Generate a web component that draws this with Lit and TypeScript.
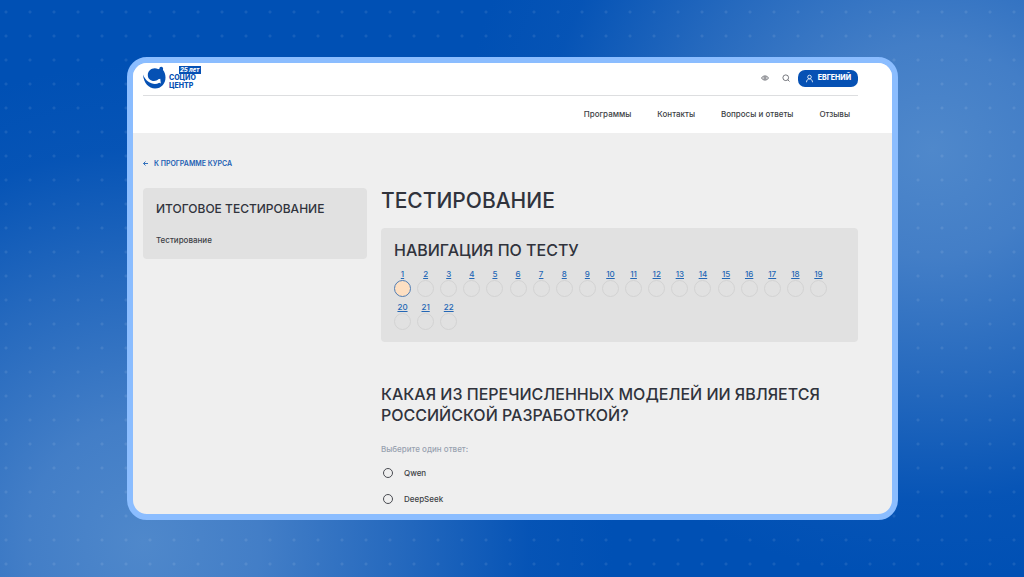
import { LitElement, html, css } from "lit";
import { customElement, state } from "lit/decorators.js";
import { classMap } from "lit/directives/class-map.js";

const NAV = ["Программы", "Контакты", "Вопросы и ответы", "Отзывы"];
const QUESTIONS = Array.from({ length: 22 }, (_, i) => i + 1);
const ANSWERS = ["Qwen", "DeepSeek"];

@customElement("site-header")
class SiteHeader extends LitElement {
  static styles = css`
    :host {
      display: block;
      background: #fff;
      padding: 0 34px 0 10px;
    }
    .top {
      display: flex;
      align-items: center;
      height: 30px;
      padding-bottom: 2px;
      border-bottom: 1px solid #dddee0;
    }
    .logo {
      display: flex;
      gap: 3px;
      color: #0651b4;
      text-decoration: none;
      margin-right: auto;
    }
    .mark {
      width: 23px;
      height: 23px;
    }
    .words {
      display: flex;
      flex-direction: column;
      font: 800 7px/8px "Inter", sans-serif;
    }
    .years {
      margin-left: 10px;
      padding: 0 1px;
      background: #0651b4;
      color: #fff;
      font-size: 6px;
      font-style: italic;
    }
    .tools {
      display: flex;
      align-items: center;
      gap: 13px;
      margin-right: 8px;
    }
    .tool {
      display: flex;
      padding: 0;
      border: 0;
      background: none;
      color: #55585f;
      cursor: pointer;
    }
    .tool svg {
      width: 8px;
      height: 8px;
    }
    .user {
      display: flex;
      align-items: center;
      gap: 4px;
      height: 17px;
      padding: 0 7px;
      border: 0;
      border-radius: 7px;
      background: #0651b4;
      color: #fff;
      font: 800 7px/10px "Inter", sans-serif;
      cursor: pointer;
    }
    .user svg {
      width: 9px;
      height: 9px;
    }
    .menu {
      display: flex;
      justify-content: flex-end;
      align-items: center;
      gap: 26px;
      height: 35px;
      padding: 0 8px 2px 0;
    }
    .menu a {
      color: #3d3f46;
      font: 500 8px/12px "Inter", sans-serif;
      text-decoration: none;
    }
  `;

  render() {
    return html`
      <div class="top">
        <a class="logo" href="#" aria-label="Социо Центр">
          <svg class="mark" viewBox="0 0 23 23" fill="currentColor">
            <path
              d="M0 8.500C.5 17 6 22.500 12 22.500C18.500 22.500 22.500 17.500 22.500 11.500C22.500 8.500 21.500 5.500 20 4C20.500 2 19.500 .8 18.200 .8C17 .8 16.200 1.800 16.400 3C15.800 3.200 15.500 3.200 15 3C10 .8 5 4 4.800 9C4.700 12.500 7.500 15 11 15C12.800 15 14.300 14.400 15.300 13.300L17.300 12.800L17.800 17.500L16.200 16.800C11 20 3 16.500 0 8.500Z"
            />
          </svg>
          <span class="words">
            <span class="years">25 лет</span>
            <span>СОЦИО</span>
            <span>ЦЕНТР</span>
          </span>
        </a>
        <div class="tools">
          <button class="tool" aria-label="Версия для слабовидящих">
            <svg viewBox="0 0 16 16" fill="none" stroke="currentColor" stroke-width="1.600">
              <path d="M1 8C4 2.500 12 2.500 15 8C12 13.500 4 13.500 1 8Z" />
              <circle cx="8" cy="8" r="2.300" />
            </svg>
          </button>
          <button class="tool" aria-label="Поиск">
            <svg viewBox="0 0 16 16" fill="none" stroke="currentColor" stroke-width="1.600">
              <circle cx="7.500" cy="7.500" r="5.700" />
              <path d="M11.500 11.500L15 15" />
            </svg>
          </button>
        </div>
        <button class="user">
          <svg viewBox="0 0 18 18" fill="none" stroke="currentColor" stroke-width="1.600">
            <circle cx="9" cy="6" r="3.600" />
            <path d="M3 16.500C3 12.500 5.500 9.800 9 9.800S15 12.500 15 16.500" />
          </svg>
          ЕВГЕНИЙ
        </button>
      </div>
      <nav class="menu">${NAV.map((t) => html`<a href="#">${t}</a>`)}</nav>
    `;
  }
}

@customElement("test-navigation")
class TestNavigation extends LitElement {
  @state() current = 1;

  static styles = css`
    :host {
      display: block;
      padding: 12px 31px 12px 13px;
      border-radius: 4px;
      background: #e1e1e1;
    }
    .title {
      margin: 0;
      font: 500 16px/21px "Inter", sans-serif;
      white-space: nowrap;
    }
    .list {
      display: grid;
      grid-template-columns: repeat(19, 17px);
      justify-content: space-between;
      row-gap: 5px;
      margin-top: 8px;
    }
    .item {
      display: flex;
      flex-direction: column;
      align-items: center;
      color: #2467b5;
      font: 500 8px/10px "Inter", sans-serif;
      text-decoration: underline;
    }
    .dot {
      box-sizing: border-box;
      width: 17px;
      height: 17px;
      margin-top: 1px;
      border: 1px solid #d3d3d3;
      border-radius: 50%;
    }
    .current .dot {
      border-color: #4f7db5;
      background: #fddfc2;
    }
  `;

  render() {
    return html`
      <h2 class="title">НАВИГАЦИЯ ПО ТЕСТУ</h2>
      <nav class="list">
        ${QUESTIONS.map(
          (n) => html`<a
            href="#"
            class=${classMap({ item: true, current: n === this.current })}
            @click=${() => (this.current = n)}
            >${n}<span class="dot"></span
          ></a>`
        )}
      </nav>
    `;
  }
}

@customElement("app-root")
class AppRoot extends LitElement {
  static styles = css`
    :host {
      display: flex;
      box-sizing: border-box;
      height: 100vh;
      padding: 57px 126px 57px 127px;
      overflow: hidden;
      color: #30333c;
      font: 500 8px/12px "Inter", sans-serif;
      background:
        radial-gradient(circle at 6px 12px, #ffffff16 1px, #ffffff00 2px) 0 0 / 24px 24px,
        radial-gradient(470px 430px at 91% 26%, #4f88cb 0%, #4a83c9e6 25%, #3d79c499 55%, #1e63bc33 82%, #0050b400 100%),
        radial-gradient(470px 480px at 14% 94%, #4f88cb 0%, #4a83c9e6 25%, #3d79c499 55%, #1e63bc33 82%, #0050b400 100%),
        #0050b4;
    }
    .window {
      flex: 1;
      min-width: 0;
      overflow: hidden;
      border: 6px solid #8bbdff;
      border-radius: 20px;
      background: #efefef;
    }
    .page {
      padding: 24px 34px 24px 10px;
    }
    .back {
      display: inline-flex;
      align-items: center;
      gap: 6px;
      color: #1c61b4;
      font-size: 7px;
      font-weight: 600;
      text-decoration: none;
    }
    .back svg {
      width: 5px;
      height: 5px;
    }
    .columns {
      display: grid;
      grid-template-columns: 224px minmax(0, 1fr);
      align-items: start;
      gap: 14px;
      margin-top: 18px;
    }
    .side {
      padding: 13px;
      border-radius: 4px;
      background: #e1e1e1;
    }
    .side-title {
      margin: 0 0 17px;
      font: 500 12px/16px "Inter", sans-serif;
      white-space: nowrap;
    }
    .side-link {
      display: block;
      color: #3d3f46;
      text-decoration: none;
    }
    .title {
      margin: 0 0 14px;
      font: 500 21px/26px "Inter", sans-serif;
    }
    .question {
      margin: 0;
      padding: 0;
      border: 0;
      color: #3d3f46;
    }
    .ask {
      margin: 0;
      padding: 42px 0 0;
      color: #30333c;
      font: 500 16px/21px "Inter", sans-serif;
    }
    .hint {
      margin: 18px 0 0;
      color: #98a2b0;
      line-height: 11px;
    }
    .answer {
      display: flex;
      align-items: center;
      gap: 11px;
      padding-left: 2px;
      height: 26px;
    }
    .answers {
      padding-top: 5px;
    }
    .radio {
      appearance: none;
      box-sizing: border-box;
      width: 10px;
      height: 10px;
      margin: 0;
      border: 1px solid #4a4c52;
      border-radius: 50%;
    }
    .radio:checked {
      background: #0651b4;
    }
  `;

  render() {
    return html`
      <div class="window">
        <site-header></site-header>
        <div class="page">
          <a class="back" href="#">
            <svg viewBox="0 0 10 10" fill="none" stroke="currentColor" stroke-width="1.800">
              <path d="M10 5H1M5 1L1 5L5 9" />
            </svg>
            К ПРОГРАММЕ КУРСА
          </a>
          <div class="columns">
            <aside class="side">
              <h2 class="side-title">ИТОГОВОЕ ТЕСТИРОВАНИЕ</h2>
              <a class="side-link" href="#">Тестирование</a>
            </aside>
            <main>
              <h1 class="title">ТЕСТИРОВАНИЕ</h1>
              <test-navigation></test-navigation>
              <fieldset class="question">
                <legend class="ask">КАКАЯ ИЗ ПЕРЕЧИСЛЕННЫХ МОДЕЛЕЙ ИИ ЯВЛЯЕТСЯ РОССИЙСКОЙ РАЗРАБОТКОЙ?</legend>
                <p class="hint">Выберите один ответ:</p>
                <div class="answers">
                  ${ANSWERS.map(
                    (a) => html`<label class="answer"><input class="radio" type="radio" name="answer" />${a}</label>`
                  )}
                </div>
              </fieldset>
            </main>
          </div>
        </div>
      </div>
    `;
  }
}
